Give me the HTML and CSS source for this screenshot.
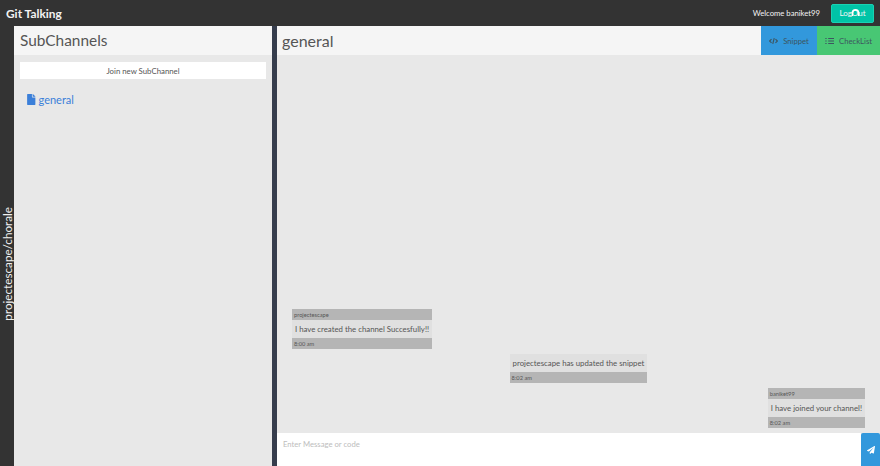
FILE: index.html
```html
<!DOCTYPE html>
<html lang="en">
<head>
    <meta charset="UTF-8">
    <title>Git Talking</title>
    <link rel="stylesheet" href="styles.css">
</head>
<body>
    <header class="topbar">
        <span class="brand">Git Talking</span>
        <div class="user">
            <span class="welcome">Welcome baniket99</span>
            <button class="logout">
                LogOut
                <svg class="cursor" viewBox="0 0 10 8"><path fill="none" stroke="currentColor" stroke-width="1.800" d="M1.500 8V4.500a3.500 3.500 0 0 1 7 0V8"/></svg>
            </button>
        </div>
    </header>
    <div class="app">
        <div class="repo-strip"><span class="repo-name">projectescape/chorale</span></div>
        <aside class="sidebar">
            <h2 class="sidebar-title">SubChannels</h2>
            <button class="join">Join new SubChannel</button>
            <a class="channel-link">
                <svg class="file-icon" viewBox="0 0 384 512"><path fill="currentColor" d="M224 136V0H24C10.700 0 0 10.700 0 24v464c0 13.300 10.700 24 24 24h336c13.300 0 24-10.700 24-24V160H248c-13.200 0-24-10.800-24-24zm160-14.100v6.100H256V0h6.100c6.400 0 12.500 2.500 17 7l97.900 98c4.500 4.500 7 10.600 7 16.900z"/></svg>
                general
            </a>
        </aside>
        <main class="chat">
            <div class="chat-head">
                <h2 class="chat-title">general</h2>
                <div class="tabs">
                    <div class="tab tab-blue">
                        <svg class="tab-icon" viewBox="0 0 16 12"><path fill="none" stroke="currentColor" stroke-width="2" d="M4.500 2.500 1 6l3.500 3.500M11.500 2.500 15 6l-3.500 3.500M9.300 1 6.700 11"/></svg>
                        Snippet
                    </div>
                    <div class="tab tab-green">
                        <svg class="tab-icon" viewBox="0 0 14 12"><path fill="none" stroke="currentColor" stroke-width="1.600" d="M5 2h9M5 6h9M5 10h9M0.500 2h2M0.500 6h2M0.500 10h2"/></svg>
                        CheckList
                    </div>
                </div>
            </div>
            <div class="messages">
                <div class="msg msg-left">
                    <div class="msg-meta">projectescape</div>
                    <div class="msg-text">I have created the channel Succesfully!!</div>
                    <div class="msg-meta">8:00 am</div>
                </div>
                <div class="msg msg-center">
                    <div class="msg-text">projectescape has updated the snippet</div>
                    <div class="msg-meta">8:02 am</div>
                </div>
                <div class="msg msg-right">
                    <div class="msg-meta">baniket99</div>
                    <div class="msg-text">I have joined your channel!</div>
                    <div class="msg-meta">8:02 am</div>
                </div>
            </div>
            <div class="composer">
                <input class="composer-input" type="text" placeholder="Enter Message or code">
                <button class="send">
                    <svg class="send-icon" viewBox="0 0 512 512"><path fill="currentColor" d="M476 3.200 12.500 270.600c-18.100 10.400-15.800 35.600 2.200 43.200L121 358.400l287.300-253.200c5.500-4.900 13.300 2.600 8.600 8.300L176 407v80.500c0 23.600 28.500 32.900 42.500 15.800L282 426l124.600 52.200c14.200 6 30.400-2.900 33-18.200l72-432C515 7.800 493.300-6.800 476 3.200z"/></svg>
                </button>
            </div>
        </main>
    </div>
</body>
</html>
```

FILE: styles.css
```css
* {
    box-sizing: border-box;
}

html, body {
    height: 100%;
}

body {
    margin: 0;
    font-family: Lato, "Noto Sans", sans-serif;
    background-color: #333;
    color: #555;
    display: flex;
    flex-direction: column;
    overflow: hidden;
}

.topbar {
    height: 26px;
    flex-shrink: 0;
    display: flex;
    align-items: center;
    justify-content: space-between;
    padding: 0 6px;
    background-color: #333;
    color: #f2f2f2;
}

.brand {
    font-size: 11.900px;
    font-weight: 700;
}

.user {
    display: flex;
    align-items: center;
    gap: 11px;
}

.welcome {
    font-size: 7.700px;
}

.logout {
    position: relative;
    width: 43px;
    height: 19px;
    padding: 0;
    border: 1px solid #1bd1b2;
    border-radius: 2px;
    background-color: #00c4a7;
    color: #f5f5f5;
    font-family: inherit;
    font-size: 8px;
}

.cursor {
    position: absolute;
    left: 19px;
    top: 4px;
    width: 9px;
    height: 7px;
    color: #fff;
}

.app {
    flex: 1;
    min-height: 0;
    display: flex;
}

.repo-strip {
    width: 14px;
    flex-shrink: 0;
    background-color: #333;
    display: flex;
    align-items: flex-end;
    justify-content: center;
    padding-bottom: 145px;
}

.repo-name {
    writing-mode: vertical-rl;
    transform: rotate(180deg);
    color: #f0f0f0;
    font-size: 11.700px;
    white-space: nowrap;
}

.sidebar {
    width: 258px;
    flex-shrink: 0;
    background-color: #e8e8e8;
    display: flex;
    flex-direction: column;
    align-items: flex-start;
}

.sidebar-title {
    width: 100%;
    height: 29px;
    margin: 0;
    padding: 0 6px;
    background-color: #f5f5f5;
    font-size: 15.400px;
    font-weight: 400;
    line-height: 29px;
}

.join {
    width: 246px;
    height: 17px;
    margin: 7px 6px 0;
    padding: 0;
    border: none;
    background-color: #fff;
    color: #555;
    font-family: inherit;
    font-size: 7.800px;
}

.channel-link {
    display: flex;
    align-items: center;
    gap: 3px;
    margin: 14px 0 0 13px;
    color: #3b7fd9;
    font-size: 11px;
}

.file-icon {
    width: 8.500px;
    height: 11px;
}

.chat {
    flex: 1;
    min-width: 0;
    margin-left: 5px;
    background-color: #e8e8e8;
    display: flex;
    flex-direction: column;
    position: relative;
}

.chat::before {
    content: "";
    position: absolute;
    left: -5px;
    top: 0;
    bottom: 0;
    width: 5px;
    background-color: #363d4d;
}

.chat-head {
    height: 29px;
    flex-shrink: 0;
    display: flex;
    justify-content: space-between;
    background-color: #f5f5f5;
}

.chat-title {
    margin: 0;
    padding-left: 5px;
    font-size: 16px;
    font-weight: 400;
    line-height: 29px;
}

.tabs {
    display: flex;
}

.tab {
    height: 29px;
    display: flex;
    align-items: center;
    justify-content: center;
    gap: 5px;
    color: #3d5560;
    font-size: 7.700px;
}

.tab-blue {
    width: 56px;
    background-color: #3298dc;
}

.tab-green {
    width: 63px;
    background-color: #48c774;
}

.tab-icon {
    width: 9px;
    height: 8px;
}

.messages {
    flex: 1;
    min-height: 0;
    display: flex;
    flex-direction: column;
    justify-content: flex-end;
    gap: 5px;
    padding: 0 15px 5px;
}

.msg {
    display: flex;
    flex-direction: column;
}

.msg-left {
    align-self: flex-start;
}

.msg-center {
    align-self: center;
}

.msg-right {
    align-self: flex-end;
}

.msg-meta {
    height: 11px;
    padding-left: 2px;
    background-color: #b5b5b5;
    font-size: 5.700px;
    line-height: 11px;
}

.msg-text {
    height: 18px;
    padding: 0 3px;
    background-color: #e0e0e0;
    font-size: 7.800px;
    line-height: 18px;
    white-space: nowrap;
}

.composer {
    height: 33px;
    flex-shrink: 0;
    display: flex;
}

.composer-input {
    flex: 1;
    min-width: 0;
    border: none;
    padding: 0 6px 11px;
    background-color: #fff;
    font-family: inherit;
    font-size: 7.700px;
    outline: none;
}

.composer-input::placeholder {
    color: #bdbdbd;
}

.send {
    width: 19px;
    padding: 0;
    border: none;
    border-radius: 2px 2px 0 0;
    background-color: #3298dc;
    color: #fff;
    display: flex;
    align-items: center;
    justify-content: center;
}

.send-icon {
    width: 8px;
    height: 8px;
}
```
